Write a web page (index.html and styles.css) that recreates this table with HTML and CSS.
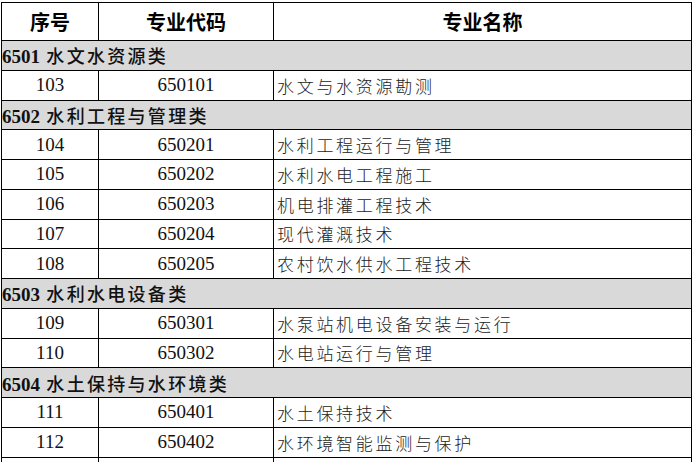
FILE: index.html
```html
<!DOCTYPE html>
<html lang="zh">
<head>
<meta charset="utf-8">
<link rel="stylesheet" href="styles.css">
</head>
<body>
<table class="tbl">
  <colgroup><col class="c1"><col class="c2"><col class="c3"></colgroup>
  <thead>
    <tr class="head"><th>序号</th><th>专业代码</th><th>专业名称</th></tr>
  </thead>
  <tbody>
    <tr class="cat"><td colspan="3"><b class="num">6501</b> 水文水资源类</td></tr>
    <tr><td class="n">103</td><td class="n">650101</td><td class="name">水文与水资源勘测</td></tr>
    <tr class="cat"><td colspan="3"><b class="num">6502</b> 水利工程与管理类</td></tr>
    <tr><td class="n">104</td><td class="n">650201</td><td class="name">水利工程运行与管理</td></tr>
    <tr><td class="n">105</td><td class="n">650202</td><td class="name">水利水电工程施工</td></tr>
    <tr><td class="n">106</td><td class="n">650203</td><td class="name">机电排灌工程技术</td></tr>
    <tr><td class="n">107</td><td class="n">650204</td><td class="name">现代灌溉技术</td></tr>
    <tr><td class="n">108</td><td class="n">650205</td><td class="name">农村饮水供水工程技术</td></tr>
    <tr class="cat"><td colspan="3"><b class="num">6503</b> 水利水电设备类</td></tr>
    <tr><td class="n">109</td><td class="n">650301</td><td class="name">水泵站机电设备安装与运行</td></tr>
    <tr><td class="n">110</td><td class="n">650302</td><td class="name">水电站运行与管理</td></tr>
    <tr class="cat"><td colspan="3"><b class="num">6504</b> 水土保持与水环境类</td></tr>
    <tr><td class="n">111</td><td class="n">650401</td><td class="name">水土保持技术</td></tr>
    <tr><td class="n">112</td><td class="n">650402</td><td class="name">水环境智能监测与保护</td></tr>
    <tr class="last"><td></td><td></td><td></td></tr>
  </tbody>
</table>
</body>
</html>
```

FILE: styles.css
```css
html, body {
  margin: 0;
  padding: 0;
  background: #ffffff;
  overflow: hidden;
}
body {
  padding: 2px 0 0 1px;
  font-family: "Liberation Serif", "Noto Sans CJK SC", serif;
  color: #111;
}
.tbl {
  border-collapse: collapse;
  table-layout: fixed;
  width: 690px;
}
.c1 { width: 97px; }
.c2 { width: 175px; }
.c3 { width: 418px; }
.tbl th, .tbl td {
  border: 1.5px solid #000;
  padding: 0;
  overflow: hidden;
  white-space: nowrap;
}
.head th {
  height: 37px;
  font-family: "Noto Sans CJK SC", sans-serif;
  font-weight: 700;
  font-size: 20px;
  text-align: center;
  vertical-align: middle;
  color: #000;
}
.tbl td {
  height: 28.75px;
  vertical-align: middle;
}
.cat td {
  background: #d9d9d9;
  font-family: "Noto Sans CJK SC", sans-serif;
  font-weight: 500;
  font-size: 18px;
  letter-spacing: 2.3px;
  padding-left: 0;
  color: #111;
}
.cat .num {
  font-family: "Liberation Serif", serif;
  font-size: 19px;
  letter-spacing: 0;
  font-weight: 700;
}
.n {
  text-align: center;
  font-size: 19px;
  font-family: "Liberation Serif", serif;
}
.name {
  font-family: "Noto Sans CJK SC", sans-serif;
  font-weight: 300;
  font-size: 17px;
  letter-spacing: 2.7px;
  padding-left: 3px !important;
  color: #222;
}
.last td {
  height: 4px;
  border-bottom: none;
}
```
